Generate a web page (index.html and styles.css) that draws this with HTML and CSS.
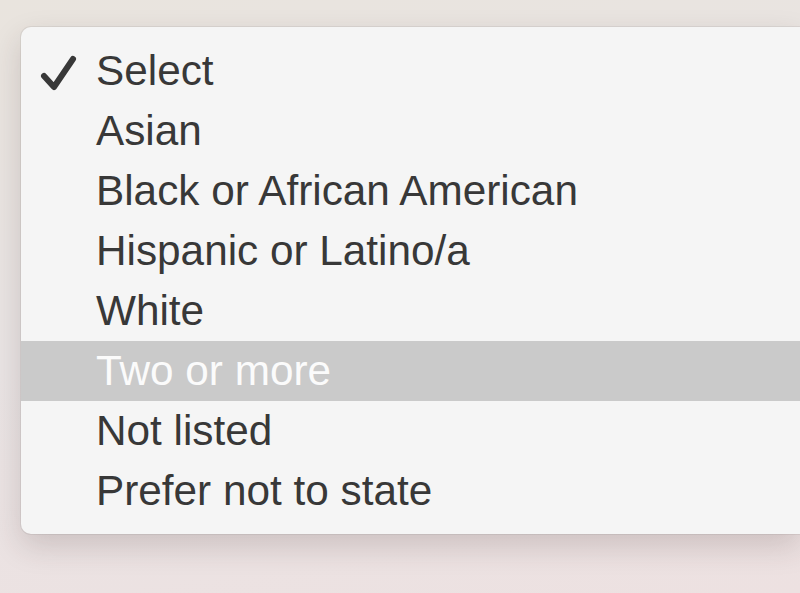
FILE: index.html
```html
<!DOCTYPE html>
<html lang="en">
<head>
    <meta charset="UTF-8">
    <meta name="viewport" content="width=device-width, initial-scale=1.0">
    <title>Select</title>
    <link rel="stylesheet" href="styles.css">
</head>
<body>

    <ul class="menu">
        <li class="menu-item checked">
            <span class="check">
                <svg width="40" height="44" viewBox="0 0 40 44">
                    <path d="M4 27 L14 38 L33 10" fill="none" stroke="#383838" stroke-width="6" stroke-linecap="round" stroke-linejoin="round"/>
                </svg>
            </span>
            Select
        </li>
        <li class="menu-item"><span class="check"></span>Asian</li>
        <li class="menu-item"><span class="check"></span>Black or African American</li>
        <li class="menu-item"><span class="check"></span>Hispanic or Latino/a</li>
        <li class="menu-item"><span class="check"></span>White</li>
        <li class="menu-item active"><span class="check"></span>Two or more</li>
        <li class="menu-item"><span class="check"></span>Not listed</li>
        <li class="menu-item"><span class="check"></span>Prefer not to state</li>
    </ul>

</body>
</html>
```

FILE: styles.css
```css
html, body {
    height: 100%;
}

body {
    margin: 0;
    padding: 27px 0 0 21px;
    box-sizing: border-box;
    overflow: hidden;
    font-family: "Liberation Sans", Arial, sans-serif;
    background: linear-gradient(170deg, #e9e4de 0%, #e9e4e4 50%, #ede1e1 100%);
}

.menu {
    list-style: none;
    margin: 0;
    padding: 14px 0 13px;
    background-color: #f5f5f5;
    border-radius: 10px 0 0 10px;
    box-shadow: 0 0 0 1px rgba(0, 0, 0, 0.06), 0 12px 30px rgba(60, 40, 40, 0.18);
}

.menu-item {
    display: flex;
    align-items: center;
    height: 60px;
    font-size: 42.3px;
    color: #383838;
}

.check {
    display: flex;
    align-items: center;
    width: 75px;
    padding-left: 19px;
    box-sizing: border-box;
}

.active {
    background-color: #cacaca;
    color: #fbfbfb;
}
```
